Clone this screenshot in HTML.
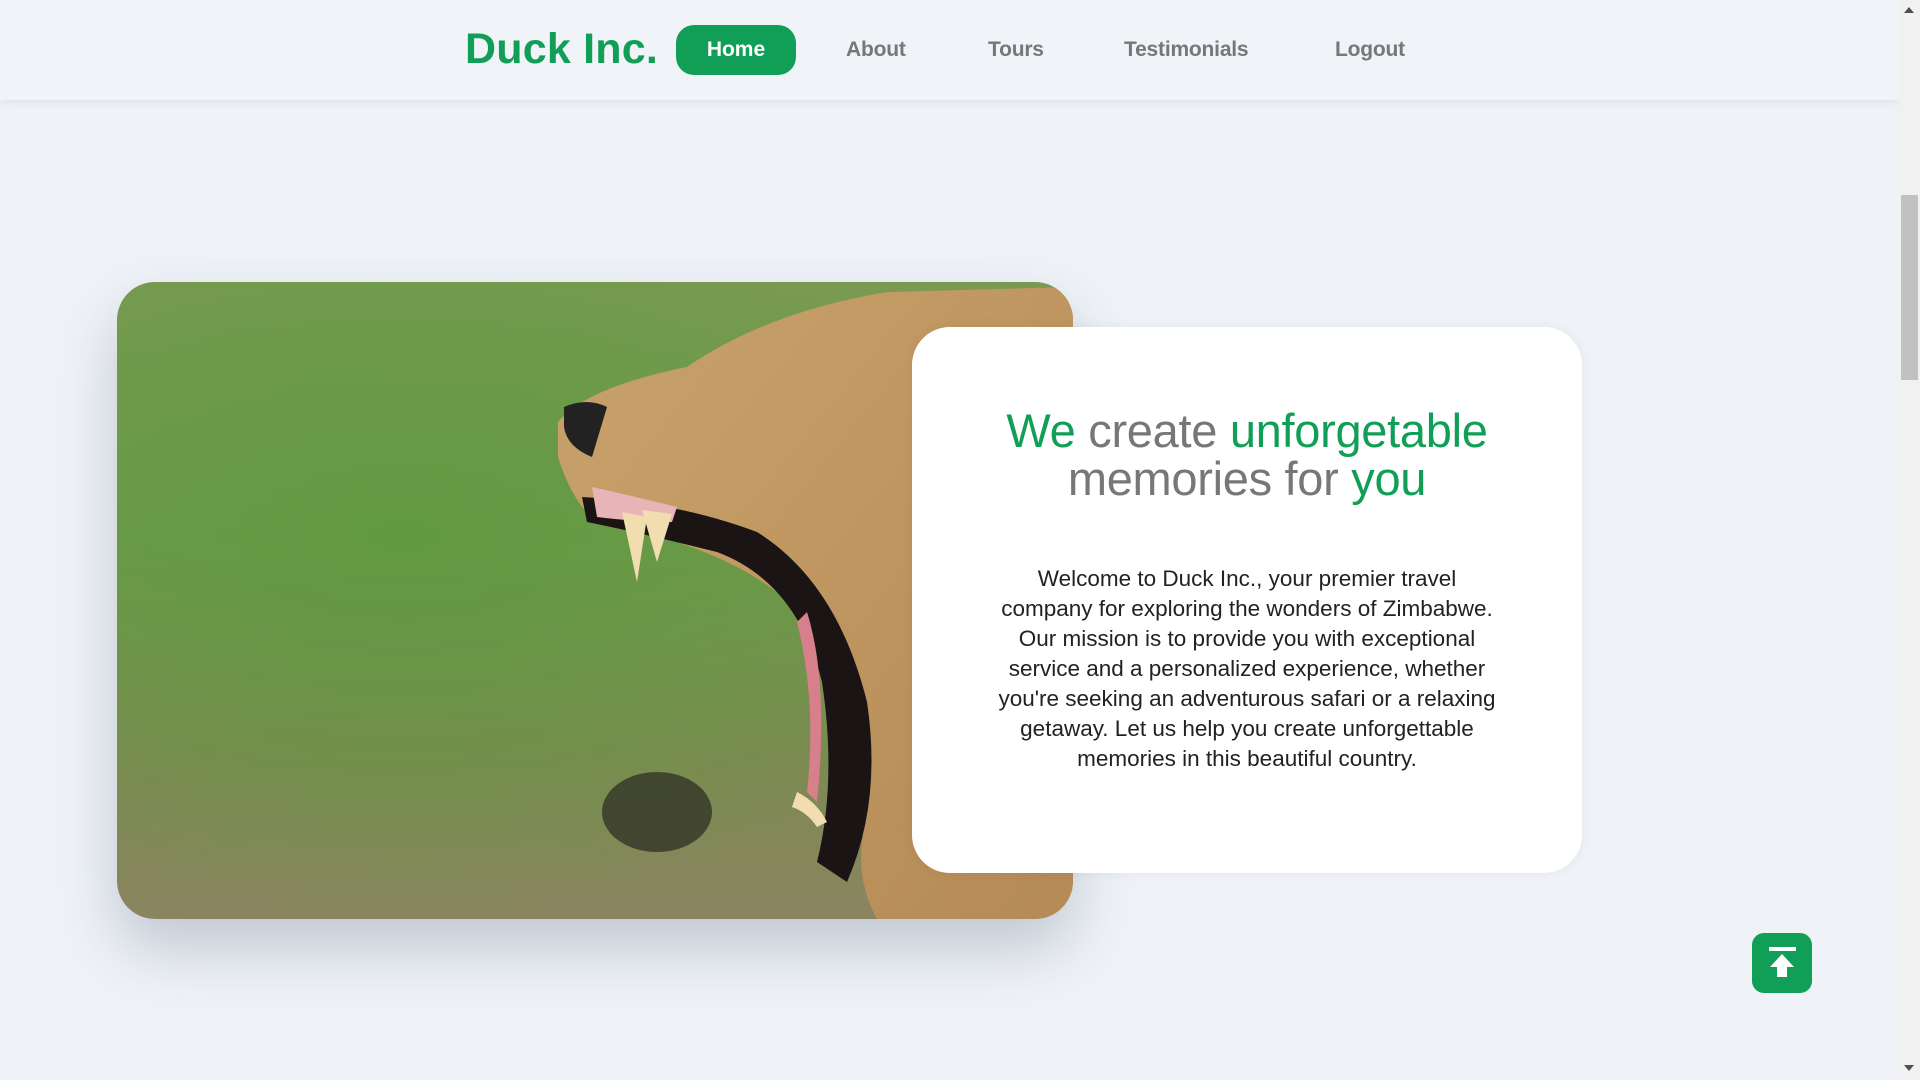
<!DOCTYPE html>
<html><head><meta charset="utf-8"><style>
*{margin:0;padding:0;box-sizing:border-box}
body{width:1920px;height:1080px;overflow:hidden;background:#eff3f8;font-family:"Liberation Sans",sans-serif;position:relative}
.nav{position:absolute;left:0;top:0;width:1899px;height:100px;background:#f0f3f7;box-shadow:0 2px 10px rgba(0,0,0,.08)}
.logo{position:absolute;left:465px;top:25px;font-size:43px;font-weight:bold;color:#119f57;letter-spacing:0.2px}
.home{position:absolute;left:676px;top:25px;width:120px;height:50px;border-radius:18px;background:#119f57;color:#fff;font-weight:bold;font-size:21px;text-align:center;line-height:50px}
.nl{position:absolute;top:38px;font-size:21px;color:#777;font-weight:bold;letter-spacing:-.2px}
.sb{position:absolute;left:1899px;top:0;width:21px;height:1080px;background:#f1f1f1}
.thumb{position:absolute;left:1901px;top:195px;width:17px;height:185px;background:#c1c1c1}
.img{position:absolute;left:117px;top:282px;width:956px;height:637px;border-radius:38px;overflow:hidden;box-shadow:0 30px 60px rgba(60,70,90,.25)}
.card{position:absolute;left:912px;top:327px;width:670px;height:546px;background:#fff;border-radius:38px;box-shadow:0 0 12px rgba(0,0,0,.06);text-align:center}
h1{position:absolute;left:0;width:100%;top:80px;font-size:47px;font-weight:normal;line-height:48px;color:#777;letter-spacing:-.3px}
.g{color:#119f57}
p{position:absolute;left:0;width:100%;top:237px;font-size:22.5px;line-height:30px;color:#222}
.top{position:absolute;left:1752px;top:933px;width:60px;height:60px;border-radius:12px;background:#119f57}
</style></head><body>
<div class="nav">
<div class="logo">Duck Inc.</div>
<div class="home">Home</div>
<div class="nl" style="left:846px">About</div>
<div class="nl" style="left:988px">Tours</div>
<div class="nl" style="left:1124px">Testimonials</div>
<div class="nl" style="left:1335px">Logout</div>
</div>
<div class="img">
<svg width="956" height="637" viewBox="0 0 956 637">
<defs>
<linearGradient id="gr" x1="0" y1="0" x2="0" y2="1">
<stop offset="0" stop-color="#7a9a52"/><stop offset=".4" stop-color="#6d9a48"/><stop offset=".75" stop-color="#7d8a52"/><stop offset="1" stop-color="#8a8560"/></linearGradient>
<radialGradient id="rg" cx=".3" cy=".4" r=".6"><stop offset="0" stop-color="#5f9a40" stop-opacity=".8"/><stop offset="1" stop-color="#5f9a40" stop-opacity="0"/></radialGradient>
<linearGradient id="tan" x1="0" y1="0" x2="1" y2="1"><stop offset="0" stop-color="#c9a26b"/><stop offset="1" stop-color="#b58a55"/></linearGradient>
</defs>
<rect width="956" height="637" fill="url(#gr)"/>
<rect width="956" height="637" fill="url(#rg)"/>
<path d="M441 140 Q470 105 570 85 Q650 30 770 10 L956 5 L956 637 L760 637 Q740 600 745 560 Q760 450 700 350 Q640 270 480 240 Q455 220 441 175Z" fill="url(#tan)"/>
<path d="M447 125 Q470 115 490 125 L475 175 Q450 165 447 145Z" fill="#222"/>
<path d="M465 215 Q560 220 640 250 Q720 300 750 420 Q765 520 730 600 L700 580 Q720 500 705 400 Q680 300 600 270 Q520 250 470 240Z" fill="#1a1414"/>
<path d="M690 330 Q712 400 700 520 L690 510 Q700 420 680 340Z" fill="#d77f8a"/>
<path d="M475 205 Q520 215 560 225 L555 240 Q520 240 480 235Z" fill="#e8b4b8"/>
<path d="M505 230 L520 300 L530 235Z M525 228 L540 280 L555 232Z" fill="#f2ddb0"/>
<path d="M680 510 Q700 520 710 540 L700 545 Q690 530 675 525Z" fill="#f2ddb0"/>
<ellipse cx="540" cy="530" rx="55" ry="40" fill="#2a2a20" opacity=".7"/>
</svg>
</div>
<div class="card">
<h1><span class="g">We</span> create <span class="g">unforgetable</span><br>memories for <span class="g">you</span></h1>
<p>Welcome to Duck Inc., your premier travel<br>company for exploring the wonders of Zimbabwe.<br>Our mission is to provide you with exceptional<br>service and a personalized experience, whether<br>you're seeking an adventurous safari or a relaxing<br>getaway. Let us help you create unforgettable<br>memories in this beautiful country.</p>
</div>
<div class="top"><svg width="60" height="60" viewBox="0 0 60 60"><rect x="17" y="14" width="27" height="4" fill="#fff"/><path d="M30 21 L42 34 L35 34 L35 44 L25 44 L25 34 L18 34Z" fill="#fff"/></svg></div>
<div class="sb"></div>
<div class="thumb"></div>
<svg style="position:absolute;left:1903px;top:6px" width="12" height="8"><path d="M1 7 L6 1 L11 7Z" fill="#505050"/></svg>
<svg style="position:absolute;left:1903px;top:1064px" width="12" height="8"><path d="M1 1 L6 7 L11 1Z" fill="#505050"/></svg>
</body></html>
